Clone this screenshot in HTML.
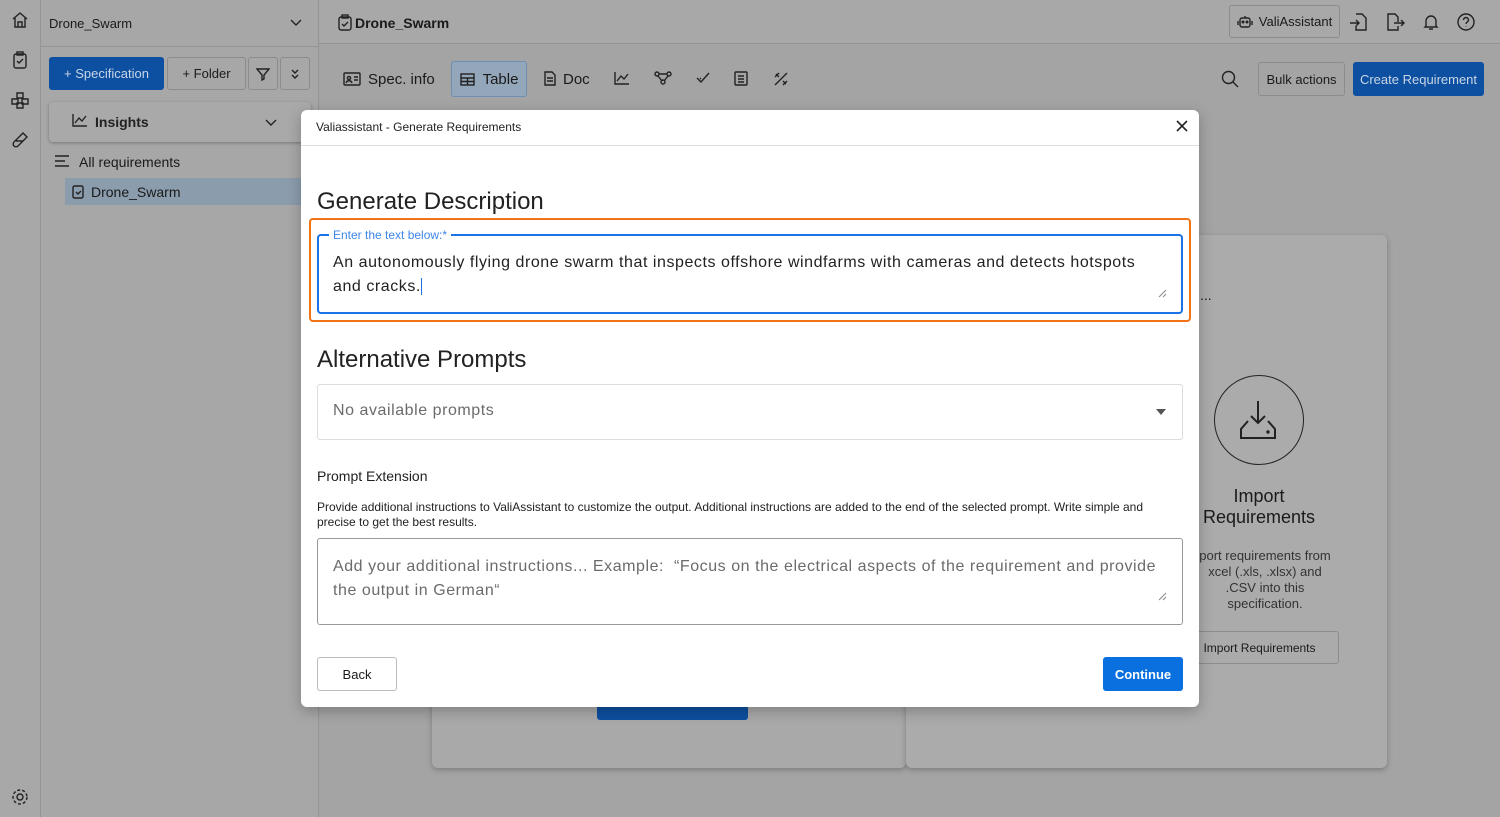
<!DOCTYPE html>
<html><head><meta charset="utf-8"><style>
*{box-sizing:border-box;margin:0;padding:0}
body{width:1500px;height:817px;overflow:hidden;background:#a4a4a4;font-family:"Liberation Sans",sans-serif;color:#1a1a1a;position:relative}
.abs{position:absolute}
.btn{position:absolute;border:1px solid #8c8c8c;border-radius:3px;font-size:13px;display:flex;align-items:center;justify-content:center}
.blue{background:#0d4fa0;color:#c9d6e6;border:none}
svg{fill:none;stroke:#222;stroke-width:1.4}
</style></head><body>
<div class="abs" style="left:0;top:0;width:41px;height:817px;background:#a8a8a8;border-right:1px solid #949494"></div>
<svg class="abs" style="left:11px;top:11px" width="18" height="18" viewBox="0 0 18 18"><path d="M2 8L9 2l7 6M4 7v9h10V7M7 16v-5h4v5"/></svg>
<svg class="abs" style="left:12px;top:51px" width="16" height="18" viewBox="0 0 16 18"><rect x="2" y="3" width="12" height="14" rx="2"/><rect x="5" y="1" width="6" height="3"/><path d="M5 10l2 2 4-4"/></svg>
<svg class="abs" style="left:10px;top:91px" width="20" height="18" viewBox="0 0 20 18"><path d="M7 2h6v5H7zM2 8h6v5H2zM12 8h6v5h-6zM7 12h6v5H7z"/></svg>
<svg class="abs" style="left:11px;top:131px" width="18" height="18" viewBox="0 0 18 18"><path d="M12 2l4 4-9 9a2.5 2.5 0 01-4-4zM5 10h7"/></svg>
<svg class="abs" style="left:11px;top:788px" width="18" height="18" viewBox="0 0 18 18"><circle cx="9" cy="9" r="3"/><circle cx="9" cy="9" r="7" stroke-dasharray="3 2"/></svg>
<div class="abs" style="left:41px;top:0;width:278px;height:817px;background:#a7a7a7;border-right:1px solid #949494"></div>
<div class="abs" style="left:41px;top:46px;width:278px;height:1px;background:#949494"></div>
<div class="abs" style="left:49px;top:16px;font-size:13px">Drone_Swarm</div>
<svg class="abs" style="left:289px;top:18px" width="14" height="10" viewBox="0 0 14 10"><path d="M2 2l5 5 5-5"/></svg>
<div class="btn blue" style="left:49px;top:57px;width:115px;height:33px">+ Specification</div>
<div class="btn" style="left:167px;top:57px;width:79px;height:33px">+ Folder</div>
<div class="btn" style="left:248px;top:57px;width:30px;height:33px"><svg width="14" height="14" viewBox="0 0 14 14"><path d="M1 2h12L8 8v4l-2 1V8z"/></svg></div>
<div class="btn" style="left:280px;top:57px;width:30px;height:33px"><svg width="12" height="12" viewBox="0 0 12 12"><path d="M3 2l3 3 3-3M3 7l3 3 3-3"/></svg></div>
<div class="abs" style="left:49px;top:102px;width:262px;height:40px;border-radius:4px;background:#a9a9a9;box-shadow:0 1px 3px rgba(0,0,0,.3)"></div>
<svg class="abs" style="left:72px;top:113px" width="16" height="14" viewBox="0 0 16 14"><path d="M1 1v12h14M3 10l4-5 3 3 4-5"/></svg>
<div class="abs" style="left:95px;top:114px;font-size:14px;font-weight:bold;color:#222">Insights</div>
<svg class="abs" style="left:264px;top:118px" width="14" height="10" viewBox="0 0 14 10"><path d="M2 2l5 5 5-5"/></svg>
<svg class="abs" style="left:54px;top:155px" width="16" height="12" viewBox="0 0 16 12"><path d="M1 1h14M1 6h10M1 11h14"/></svg>
<div class="abs" style="left:79px;top:154px;font-size:14px">All requirements</div>
<div class="abs" style="left:65px;top:178px;width:236px;height:27px;background:#8b9cad"></div>
<svg class="abs" style="left:72px;top:184px" width="12" height="15" viewBox="0 0 12 15"><rect x="1" y="2" width="10" height="12" rx="1.5"/><path d="M4 8l2 2 3-3"/></svg>
<div class="abs" style="left:91px;top:184px;font-size:14px">Drone_Swarm</div>
<div class="abs" style="left:319px;top:0;width:1181px;height:44px;background:#a8a8a8;border-bottom:1px solid #949494"></div>
<svg class="abs" style="left:338px;top:14px" width="14" height="17" viewBox="0 0 14 17"><rect x="1" y="3" width="12" height="13" rx="2"/><rect x="4" y="1" width="6" height="3"/><path d="M4 10l2 2 4-4"/></svg>
<div class="abs" style="left:355px;top:15px;font-size:14px;font-weight:bold">Drone_Swarm</div>
<div class="btn" style="left:1229px;top:5px;width:111px;height:33px;font-size:13px">
<svg width="16" height="14" viewBox="0 0 16 14" style="margin-right:6px"><rect x="3" y="3" width="10" height="9" rx="2"/><path d="M8 1v2M1 6v4M15 6v4"/><circle cx="6" cy="7" r=".8"/><circle cx="10" cy="7" r=".8"/></svg>ValiAssistant</div>
<svg class="abs" style="left:1350px;top:13px" width="18" height="18" viewBox="0 0 18 18"><path d="M6 1h6l4 4v12H6v-4M0 10h9M6 7l3 3-3 3"/></svg>
<svg class="abs" style="left:1386px;top:13px" width="20" height="18" viewBox="0 0 20 18"><path d="M12 13v4H2V1h7l3 3v5M8 10h10M15 7l3 3-3 3"/></svg>
<svg class="abs" style="left:1423px;top:13px" width="16" height="18" viewBox="0 0 16 18"><path d="M3 13V8a5 5 0 0110 0v5l1 1H2zM6 16h4"/></svg>
<svg class="abs" style="left:1457px;top:13px" width="18" height="18" viewBox="0 0 18 18"><circle cx="9" cy="9" r="8"/><path d="M6.5 7a2.5 2.5 0 115 0c0 2-2.5 2-2.5 4M9 13.5v.5"/></svg>
<!-- tabs -->
<svg class="abs" style="left:343px;top:72px" width="18" height="14" viewBox="0 0 18 14"><rect x="1" y="1" width="16" height="12" rx="1"/><circle cx="6" cy="6" r="1.6"/><path d="M3 11c1-3 5-3 6 0M11 5h4M11 8h4"/></svg>
<div class="abs" style="left:368px;top:71px;font-size:15px">Spec. info</div>
<div class="btn" style="left:451px;top:61px;width:76px;height:36px;background:#94a7ba;border-color:#6c8fb3;font-size:15px">
<svg width="15" height="13" viewBox="0 0 15 13" style="margin-right:8px"><rect x="1" y="1" width="13" height="11"/><path d="M1 5h13M1 8.5h13M7.5 5v7"/></svg>Table</div>
<svg class="abs" style="left:544px;top:71px" width="12" height="15" viewBox="0 0 12 15"><path d="M1 1h7l3 3v10H1zM3 7h6M3 10h6"/></svg>
<div class="abs" style="left:563px;top:71px;font-size:15px">Doc</div>
<svg class="abs" style="left:614px;top:71px" width="16" height="14" viewBox="0 0 16 14"><path d="M1 1v12h14M3 10l4-5 3 3 4-5"/></svg>
<svg class="abs" style="left:654px;top:71px" width="18" height="14" viewBox="0 0 18 14"><circle cx="3" cy="3" r="2"/><circle cx="15" cy="3" r="2"/><circle cx="9" cy="11" r="2"/><path d="M5 3h8M4 5l4 5M14 5l-4 5"/></svg>
<svg class="abs" style="left:696px;top:72px" width="14" height="12" viewBox="0 0 14 12"><path d="M1 6l4 4 8-9M4 6l1 1"/></svg>
<svg class="abs" style="left:734px;top:71px" width="14" height="15" viewBox="0 0 14 15"><rect x="1" y="1" width="12" height="13" rx="1"/><path d="M4 5h6M4 8h6M4 11h6"/></svg>
<svg class="abs" style="left:773px;top:71px" width="16" height="16" viewBox="0 0 16 16"><path d="M2 14L14 2M3 3l3 3M10 10l3 3M2 6l4-4M10 14l4-4"/></svg>
<svg class="abs" style="left:1221px;top:70px" width="18" height="18" viewBox="0 0 18 18"><circle cx="7.5" cy="7.5" r="6"/><path d="M12 12l5 5"/></svg>
<div class="btn" style="left:1258px;top:62px;width:87px;height:34px">Bulk actions</div>
<div class="btn blue" style="left:1353px;top:62px;width:131px;height:34px">Create Requirement</div>
<div class="abs" style="left:432px;top:235px;width:474px;height:533px;background:#a9a9a9;border-radius:6px;box-shadow:0 2px 6px rgba(0,0,0,.25)"></div>
<div class="abs" style="left:597px;top:700px;width:151px;height:20px;background:#0d4fa0;border-radius:3px"></div>
<div class="abs" style="left:906px;top:235px;width:481px;height:533px;background:#ababab;border-radius:6px;box-shadow:0 2px 6px rgba(0,0,0,.25)"></div>
<div class="abs" style="left:1200px;top:287px;font-size:14px">...</div>
<div class="abs" style="left:1214px;top:375px;width:90px;height:90px;border:1px solid #222;border-radius:50%"></div>
<svg class="abs" style="left:1238px;top:399px" width="42" height="42" viewBox="0 0 42 42"><path d="M20 2v22M13 17l7 7 7-7M10 22l-7 8v9h34v-9l-7-8" stroke-width="2"/><circle cx="30" cy="33" r="1" fill="#222"/></svg>
<div class="abs" style="left:1190px;top:486px;width:138px;text-align:center;font-size:18px;line-height:21px">Import<br>Requirements</div>
<div class="abs" style="left:1190px;top:548px;width:150px;text-align:center;font-size:13px;line-height:16px;color:#333">port requirements from<br>xcel (.xls, .xlsx) and<br>.CSV into this<br>specification.</div>
<div class="btn" style="left:1180px;top:631px;width:159px;height:33px;font-size:12px">Import Requirements</div>
<!-- modal -->
<div class="abs" style="left:301px;top:110px;width:898px;height:597px;background:#fff;border-radius:6px;box-shadow:0 4px 14px rgba(0,0,0,.25)"></div>
<div class="abs" style="left:301px;top:145px;width:898px;height:1px;background:#dedede"></div>
<div class="abs" style="left:316px;top:120px;font-size:12px;color:#222">Valiassistant - Generate Requirements</div>
<svg class="abs" style="left:1176px;top:120px" width="12" height="12" viewBox="0 0 12 12"><path d="M1 1l10 10M11 1L1 11" stroke-width="1.6"/></svg>
<div class="abs" style="left:317px;top:188px;font-size:24px;color:#222">Generate Description</div>
<div class="abs" style="left:309px;top:218px;width:882px;height:104px;border:2px solid #f07316;border-radius:4px"></div>
<div class="abs" style="left:317px;top:234px;width:866px;height:80px;border:2px solid #1a73e8;border-radius:4px"></div>
<div class="abs" style="left:329px;top:228px;padding:0 4px;background:#fff;font-size:12px;color:#3d86e8">Enter the text below:*</div>
<div class="abs" style="left:333px;top:251px;width:820px;font-size:16px;line-height:24px;color:#222;letter-spacing:.55px">An autonomously flying drone swarm that inspects offshore windfarms with cameras and detects hotspots and cracks.<span style="border-left:1px solid #1a73e8"></span></div>
<svg class="abs" style="left:1157px;top:288px" width="10" height="10" viewBox="0 0 10 10"><path d="M9 2L2 9M9 6L6 9" stroke="#888" stroke-width="1"/></svg>
<div class="abs" style="left:317px;top:346px;font-size:24px;color:#222">Alternative Prompts</div>
<div class="abs" style="left:317px;top:384px;width:866px;height:56px;border:1px solid #ddd;border-radius:3px"></div>
<div class="abs" style="left:333px;top:402px;font-size:16px;color:#6b6b6b;letter-spacing:.55px">No available prompts</div>
<div class="abs" style="left:1156px;top:409px;border:5px solid transparent;border-top:6px solid #555"></div>
<div class="abs" style="left:317px;top:468px;font-size:14px;color:#222">Prompt Extension</div>
<div class="abs" style="left:317px;top:500px;width:864px;font-size:12px;line-height:15px;color:#222">Provide additional instructions to ValiAssistant to customize the output. Additional instructions are added to the end of the selected prompt. Write simple and precise to get the best results.</div>
<div class="abs" style="left:317px;top:538px;width:866px;height:87px;border:1px solid #999;border-radius:3px"></div>
<div class="abs" style="left:333px;top:555px;width:830px;font-size:16px;line-height:24px;color:#6b6b6b;letter-spacing:.55px">Add your additional instructions... Example:&nbsp; “Focus on the electrical aspects of the requirement and provide the output in German“</div>
<svg class="abs" style="left:1157px;top:591px" width="10" height="10" viewBox="0 0 10 10"><path d="M9 2L2 9M9 6L6 9" stroke="#888" stroke-width="1"/></svg>
<div class="btn" style="left:317px;top:657px;width:80px;height:34px;border-color:#bbb;font-size:13px">Back</div>
<div class="btn" style="left:1103px;top:657px;width:80px;height:34px;background:#0a6fdf;color:#fff;border:none;font-size:13px;font-weight:bold">Continue</div>
</body></html>
